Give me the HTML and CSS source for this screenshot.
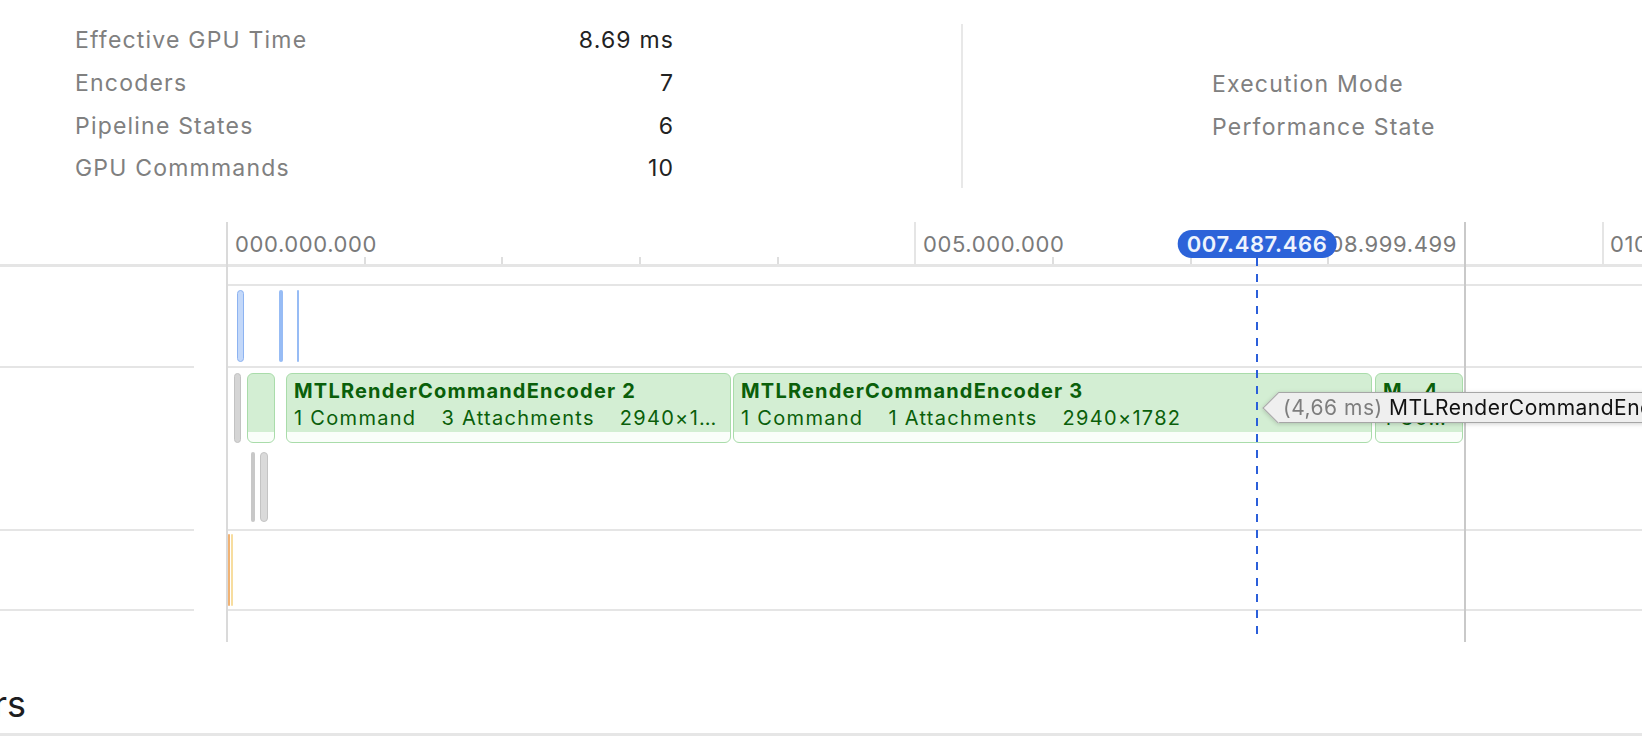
FILE: index.html
```html
<!DOCTYPE html>
<html lang="en">
<head>
  <meta charset="UTF-8" />
  <meta name="viewport" content="width=device-width, initial-scale=1.0"/>
  <title>Command Buffer - GPU Timeline</title>
  <link rel="stylesheet" href="styles.css">
</head>
<body>
  <!-- summary numbers for the selected command buffer -->
  <div class="summary">
    <div class="stats">
      <div class="stat-row"><span class="stat-label">Effective GPU Time</span><span class="stat-value">8.69 ms</span></div>
      <div class="stat-row"><span class="stat-label">Encoders</span><span class="stat-value">7</span></div>
      <div class="stat-row"><span class="stat-label">Pipeline States</span><span class="stat-value">6</span></div>
      <div class="stat-row"><span class="stat-label">GPU Commmands</span><span class="stat-value">10</span></div>
    </div>
    <div class="divider"></div>
    <div class="modes">
      <div class="mode-row">Execution Mode</div>
      <div class="mode-row">Performance State</div>
    </div>
  </div>

  <div class="timeline">
    <div class="track-names">
      <div class="names-head"></div>
      <div class="name-row name-vertex"></div>
      <div class="name-row name-encoders"></div>
      <div class="name-row name-compute"></div>
    </div>

    <div class="tracks">
      <!-- ruler: 1 ms = 137.6px -->
      <div class="ruler">
        <div class="tick major" style="left: 686px"></div>
        <div class="tick major" style="left: 1374px"></div>
        <div class="tick" style="left: 136px"></div>
        <div class="tick" style="left: 273px"></div>
        <div class="tick" style="left: 411px"></div>
        <div class="tick" style="left: 549px"></div>
        <div class="tick" style="left: 824px"></div>
        <div class="tick" style="left: 962px"></div>
        <div class="tick" style="left: 1099px"></div>
        <span class="ruler-label" style="left: 7px">000.000.000</span>
        <span class="ruler-label" style="left: 695px">005.000.000</span>
        <span class="ruler-label end-label">008.999.499</span>
        <span class="ruler-label" style="left: 1382px">010.000.000</span>
      </div>

      <div class="track track-top"></div>

      <div class="track track-vertex">
        <div class="blip hollow" style="left: 9px; width: 7px"></div>
        <div class="blip" style="left: 51px; width: 4px"></div>
        <div class="blip" style="left: 69px; width: 2px"></div>
      </div>

      <div class="track track-encoders">
        <div class="pill" style="left: 6px; width: 7px"></div>
        <div class="enc" style="left: 19px; width: 28px"></div>
        <div class="enc" style="left: 58px; width: 445px">
          <div class="enc-title">MTLRenderCommandEncoder 2</div>
          <div class="enc-meta"><span>1 Command</span><span>3 Attachments</span><span>2940×1782</span></div>
        </div>
        <div class="enc" style="left: 505px; width: 639px">
          <div class="enc-title">MTLRenderCommandEncoder 3</div>
          <div class="enc-meta"><span>1 Command</span><span>1 Attachments</span><span>2940×1782</span></div>
        </div>
        <div class="enc" style="left: 1147px; width: 88px">
          <div class="enc-title">M…4</div>
          <div class="enc-meta">1 Co…</div>
        </div>
        <div class="pill sub" style="left: 23px; width: 4px"></div>
        <div class="pill sub hollow" style="left: 32px; width: 8px"></div>
      </div>

      <div class="track track-compute">
        <div class="blip orange" style="left: 0; width: 2px"></div>
        <div class="blip yellow" style="left: 3px; width: 2px"></div>
      </div>

      <!-- overlays -->
      <div class="end-marker" style="left: 1236px"></div>
      <div class="playhead-line" style="left: 1028px"></div>
      <div class="playhead-badge" style="left: 1029px">007.487.466</div>
      <div class="tooltip" style="left: 1034px">
        <span class="tip-time">(4,66 ms)</span> MTLRenderCommandEncoder 3
      </div>
    </div>
  </div>

  <div class="section-head">
    <div class="section-title"><h2>Encoders</h2></div>
  </div>
</body>
</html>
```

FILE: styles.css
```css
* {
  box-sizing: border-box;
}

body {
  margin: 0;
  width: 1642px;
  height: 750px;
  overflow: hidden;
  background: #fff;
  font-family: Inter, "Open Sans", sans-serif;
  color: #1d1d1f;
}

/* summary */

.summary {
  display: flex;
  align-items: flex-start;
  height: 222px;
  padding-top: 19px;
}

.stats {
  margin-left: 75px;
  width: 598px;
}

.stat-row {
  display: flex;
  justify-content: space-between;
  align-items: center;
  height: 42.7px;
  font-size: 23px;
  letter-spacing: 1.2px;
}

.stat-value {
  color: #222;
  margin-right: -1.2px;
}

.stat-label,
.mode-row {
  color: #808080;
}

.divider {
  width: 2px;
  height: 164px;
  margin: 5px 0 0 288px;
  background: #e8e8e8;
}

.modes {
  margin-left: 249px;
  padding-top: 43px;
}

.mode-row {
  display: flex;
  align-items: center;
  height: 43px;
  font-size: 23px;
  letter-spacing: 1.2px;
}

/* timeline */

.timeline {
  display: flex;
  height: 420px;
}

.track-names {
  width: 226px;
  flex-shrink: 0;
}

.names-head {
  height: 45px;
  border-bottom: 3px solid #e5e5e5;
}

.name-row {
  width: 194px;
  border-bottom: 2px solid #e5e5e5;
}

.name-vertex { height: 101px; }
.name-encoders { height: 163px; }
.name-compute { height: 80px; }

.tracks {
  flex: 1;
  position: relative;
  overflow: hidden;
  border-left: 2px solid #dadada;
}

.ruler {
  position: relative;
  height: 45px;
  border-bottom: 3px solid #e5e5e5;
}

.tick {
  position: absolute;
  bottom: 0;
  width: 2px;
  height: 7px;
  background: #dedede;
}

.tick.major {
  height: 100%;
  background: #e5e5e5;
}

.ruler-label {
  position: absolute;
  top: 9px;
  font-size: 22px;
  line-height: 26px;
  letter-spacing: 0.6px;
  color: #7a7a7a;
  white-space: nowrap;
}

.end-label {
  right: 185px;
}

.track {
  position: relative;
  border-bottom: 2px solid #e5e5e5;
}

.track-top { height: 19px; }
.track-vertex { height: 82px; }
.track-encoders { height: 163px; }
.track-compute { height: 80px; }

.blip {
  position: absolute;
  top: 4px;
  height: 72px;
  border-radius: 2px;
  background: #97bcf5;
}

.blip.hollow {
  background: #c3d8f9;
  border: 1.5px solid #8db3f1;
  border-radius: 4px;
}

.track-compute .blip {
  top: 3px;
}

.blip.orange { background: #f0b274; }
.blip.yellow { background: #f7dd9f; }

/* encoder blocks */

.enc {
  position: absolute;
  top: 5px;
  height: 70px;
  padding: 4px 0 0 7px;
  border: 1px solid #a9dcaa;
  border-radius: 6px;
  background: linear-gradient(to bottom, #d3eed3 calc(100% - 10px), #fafefa calc(100% - 10px));
  color: #0a5f0a;
  overflow: hidden;
}

.enc-title,
.enc-meta {
  font-size: 20px;
  line-height: 27px;
  letter-spacing: 1.3px;
  white-space: nowrap;
  overflow: hidden;
  text-overflow: ellipsis;
  padding-right: 6px;
}

.enc-title {
  font-weight: 700;
  letter-spacing: 1.2px;
}

.enc-meta span {
  margin-right: 25px;
}

.pill {
  position: absolute;
  top: 5px;
  height: 70px;
  border-radius: 4px;
  background: #d5d5d5;
  border: 1px solid #c2c2c2;
}

.pill.sub {
  top: 84px;
  background: #c8c8c8;
  border: none;
}

.pill.sub.hollow {
  background: #dadada;
  border: 1.5px solid #c4c4c4;
}

/* overlays */

.end-marker {
  position: absolute;
  top: 0;
  bottom: 0;
  width: 2px;
  background: #c9c9c9;
}

.playhead-line {
  position: absolute;
  top: 36px;
  bottom: 0;
  width: 2px;
  background: repeating-linear-gradient(to bottom, #2b5fda 0 8px, transparent 8px 16px);
}

.playhead-badge {
  position: absolute;
  top: 8px;
  transform: translateX(-50%);
  height: 28px;
  padding: 0 9px;
  border-radius: 14px;
  background: #2c63d9;
  color: #eef3fd;
  font-size: 22px;
  font-weight: 600;
  letter-spacing: 0.6px;
  line-height: 28px;
  white-space: nowrap;
}

.tooltip {
  position: absolute;
  top: 170px;
  height: 31px;
  margin-left: 16px;
  padding: 0 8px 0 5px;
  width: 420px;
  background: #efefef;
  border: 1px solid #a6a6a6;
  border-left: none;
  font-size: 21px;
  line-height: 29px;
  letter-spacing: 0.5px;
  color: #111;
  white-space: nowrap;
  filter: drop-shadow(0 1px 2px rgba(0,0,0,0.18));
}

.tooltip::before {
  content: "";
  position: absolute;
  left: -11px;
  top: 4px;
  width: 21px;
  height: 21px;
  background: #efefef;
  border-left: 1px solid #a6a6a6;
  border-bottom: 1px solid #a6a6a6;
  transform: rotate(45deg);
}

.tooltip span {
  position: relative;
}

.tip-time {
  color: #7d7d7d;
}

/* section heading below the timeline */

.section-head {
  display: flex;
  align-items: flex-end;
  height: 94px;
  padding-bottom: 7px;
  border-bottom: 3px solid #e6e6e6;
}

.section-title {
  display: flex;
  justify-content: flex-end;
  width: 26px;
  overflow: hidden;
}

.section-title h2 {
  margin: 0;
  font-size: 36px;
  font-weight: 400;
  line-height: 44px;
  white-space: nowrap;
  color: #1d1d1f;
}
```
